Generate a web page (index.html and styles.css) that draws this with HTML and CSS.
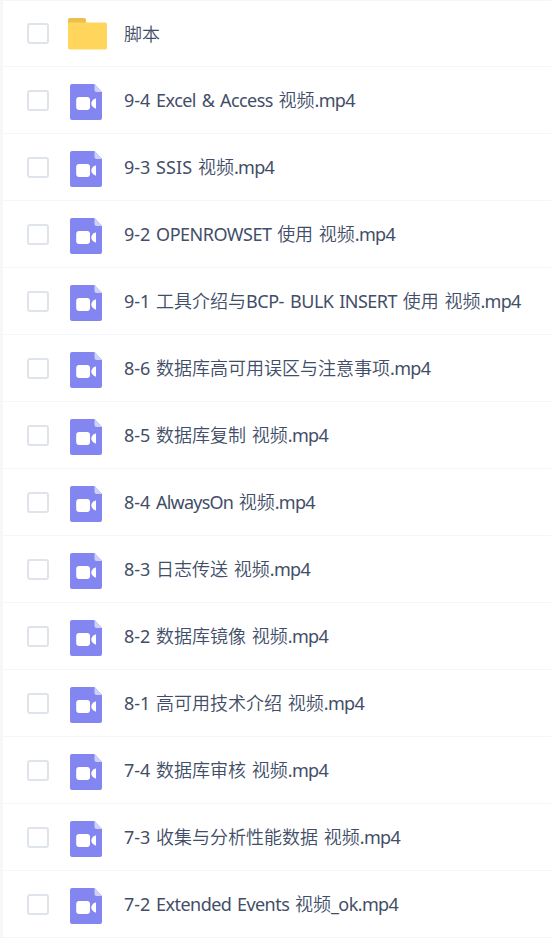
FILE: index.html
```
<!DOCTYPE html>
<html lang="zh-CN">
<head>
    <meta charset="UTF-8">
    <meta name="viewport" content="width=device-width, initial-scale=1.0">
    <title>文件列表</title>
    <link rel="stylesheet" href="styles.css">
</head>
<body>
    <svg class="sprite" width="0" height="0">
        <symbol id="icon-folder" viewBox="0 0 40 32">
            <path fill="#ecbe4c" d="M0 9V2Q0 0 2 0H16Q18 0 18 2V9Z"/>
            <path fill="#ffd55c" d="M0 4.500H37Q39 4.500 39 6.500V29.500Q39 31.500 37 31.500H2Q0 31.500 0 29.500Z"/>
        </symbol>
        <symbol id="icon-video" viewBox="0 0 32 36">
            <path fill="#8385f0" d="M2 0H24.500L32 8V34Q32 36 30 36H2Q0 36 0 34V2Q0 0 2 0Z"/>
            <path fill="#d0d1fa" d="M24.500 0L32 8H26.500Q24.500 8 24.500 6Z"/>
            <rect x="6.200" y="13" width="13.800" height="13" rx="3" fill="#fff"/>
            <path fill="#fff" d="M26 14.200V24.800Q21.300 22.800 21.300 19.500Q21.300 16.200 26 14.200Z"/>
        </symbol>
    </svg>

    <ul id="file-list"></ul>

    <script>
        const files = [
            { name: '脚本' },
            { name: '9-4 Excel & Access 视频.mp4', tracking: -0.55 },
            { name: '9-3 SSIS 视频.mp4', tracking: 0.1 },
            { name: '9-2 OPENROWSET 使用 视频.mp4' },
            { name: '9-1 工具介绍与BCP- BULK INSERT 使用 视频.mp4' },
            { name: '8-6 数据库高可用误区与注意事项.mp4' },
            { name: '8-5 数据库复制 视频.mp4' },
            { name: '8-4 AlwaysOn 视频.mp4', tracking: -0.8 },
            { name: '8-3 日志传送 视频.mp4' },
            { name: '8-2 数据库镜像 视频.mp4' },
            { name: '8-1 高可用技术介绍 视频.mp4' },
            { name: '7-4 数据库审核 视频.mp4' },
            { name: '7-3 收集与分析性能数据 视频.mp4' },
            { name: '7-2 Extended Events 视频_ok.mp4', tracking: -0.55 },
        ];

        const list = document.getElementById('file-list');

        // split a name into Chinese, Latin and other runs
        function addName(el, name) {
            name.match(/[\u4e00-\u9fff]+|\.mp4|[A-Za-z_&]+|./g).forEach((part) => {
                const span = document.createElement('span');
                span.textContent = part;
                if (/[\u4e00-\u9fff]/.test(part)) {
                    span.className = 'han';
                } else if (part === '.mp4') {
                    span.className = 'ext';
                } else if (/[A-Za-z_&]/.test(part)) {
                    span.className = 'latin';
                }
                el.appendChild(span);
            });
        }

        files.forEach(({ name, tracking = -0.5 }) => {
            const type = name.endsWith('.mp4') ? 'video' : 'folder';
            const row = document.createElement('li');
            row.className = `file-row ${type}`;
            row.style.setProperty('--tracking', `${tracking}px`);
            row.innerHTML = `
                <input type="checkbox" class="check">
                <svg class="icon"><use href="#icon-${type}"/></svg>
                <span class="name"></span>
            `;
            addName(row.querySelector('.name'), name);
            list.appendChild(row);
        });
    </script>
</body>
</html>
```
FILE: styles.css
```
body {
    margin: 0;
    background: #fff;
    font-family: "Noto Sans", "Noto Sans CJK SC", sans-serif;
    color: #424e67;
    overflow: hidden;
}

.sprite {
    display: block;
}

#file-list {
    margin: 0;
    padding: 0;
    list-style: none;
    border-left: 3px solid #f7f7f7;
    border-top: 1px solid #f1f5fd;
}

.file-row {
    display: flex;
    align-items: center;
    box-sizing: border-box;
    height: 67px;
    padding-left: 24px;
    border-bottom: 1px solid #f1f5fd;
}

.file-row:first-child {
    height: 66px;
}

.check {
    appearance: none;
    box-sizing: border-box;
    flex: none;
    width: 22px;
    height: 21px;
    margin: 0;
    border: 2px solid #dfe4ea;
    border-radius: 3px;
    background: #fff;
}

.icon {
    flex: none;
    width: 32px;
    height: 36px;
    margin: 4px 22px 0 21px;
}

.folder .icon {
    width: 40px;
    height: 32px;
    margin: 0 16px 0 19px;
}

.name {
    font-size: 18px;
    line-height: 26px;
    white-space: pre;
    word-spacing: 1px;
}

.han {
    font-family: "Noto Sans", "Noto Sans CJK SC DemiLight", "Noto Sans CJK SC", sans-serif;
    font-weight: 350;
}

.latin {
    letter-spacing: var(--tracking);
}

.ext {
    letter-spacing: -0.7px;
}
```
